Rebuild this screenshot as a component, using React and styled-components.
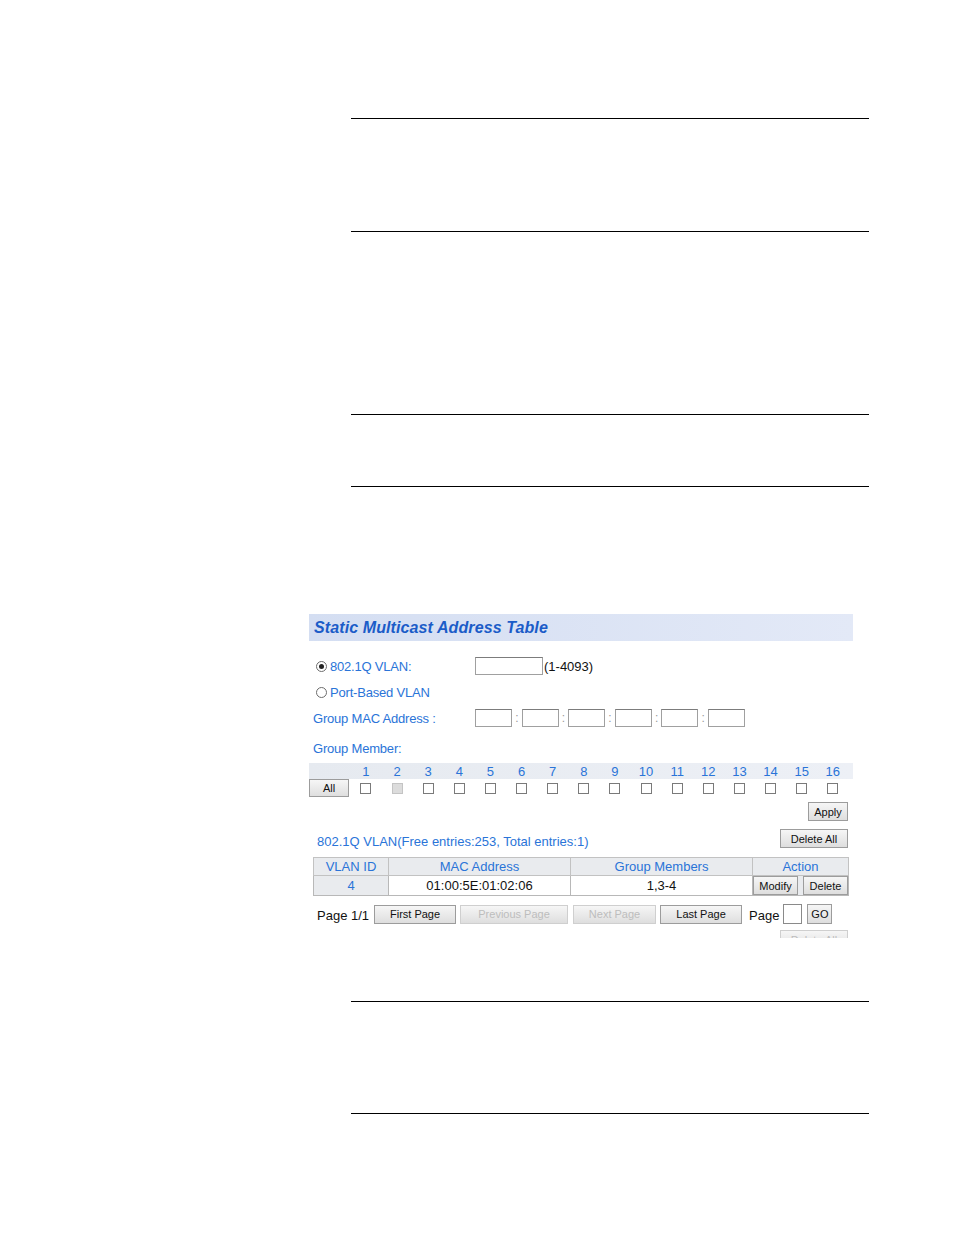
import React from "react";
import styled, { createGlobalStyle } from "styled-components";

const GlobalStyle = createGlobalStyle`
  html, body {
    margin: 0;
    padding: 0;
    background: #ffffff;
  }
  body {
    font-family: "Liberation Sans", Arial, sans-serif;
  }
`;

const Page = styled.div`
  width: 954px;
  min-height: 1235px;
  padding-top: 118px;
  box-sizing: border-box;
  background: #ffffff;
`;

const NoteBox = styled.div`
  margin: ${(p) => p.$mt || 0}px 0 0 351px;
  width: 518px;
  height: ${(p) => p.$h}px;
  box-sizing: border-box;
  border-top: 1px solid #000;
  border-bottom: 1px solid #000;
`;

const Panel = styled.section`
  margin: 127px 0 0 309px;
  width: 544px;
  height: 324px;
  overflow: hidden;
  font-family: "Liberation Sans", Arial, sans-serif;
  font-size: 13px;
  color: #000;
`;

const TitleBar = styled.div`
  height: 27px;
  display: flex;
  align-items: center;
  padding-left: 5px;
  background: linear-gradient(to right, #d4def2, #e3e9f7);
  color: #1b5cc8;
  font-weight: bold;
  font-style: italic;
  font-size: 16px;
  letter-spacing: 0.1px;
`;

const Form = styled.div`
  padding: 12px 0 0 4px;
`;

const FormRow = styled.div`
  display: flex;
  align-items: center;
  height: ${(p) => p.$h || 26}px;
  margin-top: ${(p) => p.$mt || 0}px;
`;

const Label = styled.label`
  width: 162px;
  flex-shrink: 0;
  display: flex;
  align-items: center;
  color: #2a74d8;
  letter-spacing: -0.2px;
`;

const Radio = styled.span`
  width: 9px;
  height: 9px;
  margin: 0 3px 0 3px;
  border: 1px solid #6c6c6c;
  border-radius: 50%;
  background: #fff;
  display: inline-flex;
  align-items: center;
  justify-content: center;

  &::after {
    content: "";
    width: 5px;
    height: 5px;
    border-radius: 50%;
    background: ${(p) => (p.$checked ? "#222" : "transparent")};
  }
`;

const TextBox = styled.span`
  display: inline-block;
  width: ${(p) => p.$w}px;
  height: 18px;
  box-sizing: border-box;
  border: 1px solid #a0a0a0;
  border-top-color: #7c7c7c;
  background: #fff;
`;

const Hint = styled.span`
  margin-left: 1px;
  color: #111;
`;

const Colon = styled.span`
  width: 9.6px;
  text-align: center;
  color: #9a9a9a;
  font-size: 12px;
`;

const PortGrid = styled.div`
  display: grid;
  grid-template-columns: 41.4px repeat(16, 31.13px);
  align-items: center;
  height: ${(p) => p.$h}px;
  margin-top: ${(p) => p.$mt || 0}px;
  background: ${(p) => (p.$band ? "linear-gradient(to right, #e6eaf0, #edf0f6)" : "transparent")};
`;

const PortNum = styled.span`
  text-align: center;
  color: #2a74d8;
  line-height: 16px;
  padding-top: 1px;
`;

const CheckCell = styled.span`
  display: flex;
  justify-content: center;
`;

const Check = styled.span`
  width: 11px;
  height: 11px;
  box-sizing: border-box;
  border: 1px solid ${(p) => (p.$disabled ? "#c4c4c4" : "#7a7a7a")};
  background: ${(p) => (p.$disabled ? "#dcdcdc" : "#fff")};
`;

const Button = styled.button`
  width: ${(p) => p.$w}px;
  height: ${(p) => p.$h || 19}px;
  padding: 0;
  box-sizing: border-box;
  border: 1px solid ${(p) => (p.disabled ? "#cfcfcf" : "#9c9c9c")};
  background: linear-gradient(to bottom, #f6f6f6, #dedede);
  color: ${(p) => (p.disabled ? "#bdbdbd" : "#111")};
  font-family: "Liberation Sans", Arial, sans-serif;
  font-size: 11px;
  flex-shrink: 0;
`;

const RightRow = styled.div`
  display: flex;
  justify-content: ${(p) => (p.$split ? "space-between" : "flex-end")};
  align-items: flex-end;
  margin-top: ${(p) => p.$mt || 0}px;
  padding: 0 5px 0 8px;
`;

const Info = styled.span`
  color: ${(p) => p.$color || "#2a74d8"};
  line-height: 15px;
  margin-bottom: -1px;
`;

const Table = styled.table`
  margin: 9px 0 0 4px;
  width: 535px;
  border-collapse: collapse;
  table-layout: fixed;
`;

const Th = styled.th`
  height: 17px;
  padding: 0;
  border: 1px solid #c2c2c2;
  background: #e9ebee;
  color: #2a74d8;
  font-weight: normal;
  font-size: 13px;
  line-height: 15px;
  text-align: center;
`;

const Td = styled.td`
  height: 19px;
  padding: 0;
  border: 1px solid #b8b8b8;
  background: ${(p) => (p.$shaded ? "#e9ebee" : "#fff")};
  color: ${(p) => (p.$blue ? "#2a74d8" : "#111")};
  text-align: center;
  font-size: 13px;
  line-height: 15px;
`;

const ActionWrap = styled.div`
  display: flex;
  justify-content: space-between;
`;

const Pager = styled.div`
  display: flex;
  align-items: center;
  gap: 4px;
  margin-top: 8px;
  padding-left: 8px;
  height: 20px;
`;

const PagerText = styled.span`
  color: #111;
  margin-right: ${(p) => p.$mr || 0}px;
  margin-left: ${(p) => p.$ml || 0}px;
  line-height: 15px;
  margin-top: 3px;
`;

const PageInput = styled.span`
  width: 19px;
  height: 20px;
  box-sizing: border-box;
  border: 1px solid #8a8a8a;
  background: #fff;
`;

const ports = Array.from({ length: 16 }, (_, i) => i + 1);

export default function App() {
  return (
    <Page>
      <GlobalStyle />
      <NoteBox $h={114} />
      <NoteBox $mt={182} $h={73} />

      <Panel>
        <TitleBar>Static Multicast Address Table</TitleBar>
        <Form>
          <FormRow>
            <Label>
              <Radio $checked />
              802.1Q VLAN:
            </Label>
            <TextBox $w={68} />
            <Hint>(1-4093)</Hint>
          </FormRow>
          <FormRow>
            <Label>
              <Radio />
              Port-Based VLAN
            </Label>
          </FormRow>
          <FormRow>
            <Label>Group MAC Address :</Label>
            {[0, 1, 2, 3, 4, 5].map((i) => (
              <React.Fragment key={i}>
                {i > 0 && <Colon>:</Colon>}
                <TextBox $w={37} />
              </React.Fragment>
            ))}
          </FormRow>
          <FormRow $mt={4}>
            <Label>Group Member:</Label>
          </FormRow>
        </Form>

        <PortGrid $h={16} $mt={2} $band>
          <span />
          {ports.map((n) => (
            <PortNum key={n}>{n}</PortNum>
          ))}
        </PortGrid>
        <PortGrid $h={18}>
          <Button $w={40} $h={18}>All</Button>
          {ports.map((n) => (
            <CheckCell key={n}>
              <Check $disabled={n === 2} />
            </CheckCell>
          ))}
        </PortGrid>

        <RightRow $mt={5}>
          <Button $w={40}>Apply</Button>
        </RightRow>
        <RightRow $mt={8} $split>
          <Info>802.1Q VLAN(Free entries:253, Total entries:1)</Info>
          <Button $w={68}>Delete All</Button>
        </RightRow>

        <Table>
          <colgroup>
            <col style={{ width: 75 }} />
            <col style={{ width: 182 }} />
            <col style={{ width: 182 }} />
            <col style={{ width: 96 }} />
          </colgroup>
          <thead>
            <tr>
              <Th>VLAN ID</Th>
              <Th>MAC Address</Th>
              <Th>Group Members</Th>
              <Th>Action</Th>
            </tr>
          </thead>
          <tbody>
            <tr>
              <Td $shaded $blue>4</Td>
              <Td>01:00:5E:01:02:06</Td>
              <Td>1,3-4</Td>
              <Td $shaded>
                <ActionWrap>
                  <Button $w={45}>Modify</Button>
                  <Button $w={45}>Delete</Button>
                </ActionWrap>
              </Td>
            </tr>
          </tbody>
        </Table>

        <Pager>
          <PagerText $mr={1}>Page 1/1</PagerText>
          <Button $w={82}>First Page</Button>
          <Button $w={108} disabled>Previous Page</Button>
          <Button $w={83} disabled style={{ marginLeft: 1 }}>Next Page</Button>
          <Button $w={82}>Last Page</Button>
          <PagerText $ml={3}>Page</PagerText>
          <PageInput />
          <Button $w={25} $h={20} style={{ marginLeft: 1 }}>GO</Button>
        </Pager>

        <RightRow $mt={6} $split>
          <Info $color="#f0a640">Port-Based VLAN(Free entries:256, Total entries:0)</Info>
          <Button $w={68} disabled>Delete All</Button>
        </RightRow>
      </Panel>

      <NoteBox $mt={63} $h={113} />
    </Page>
  );
}
